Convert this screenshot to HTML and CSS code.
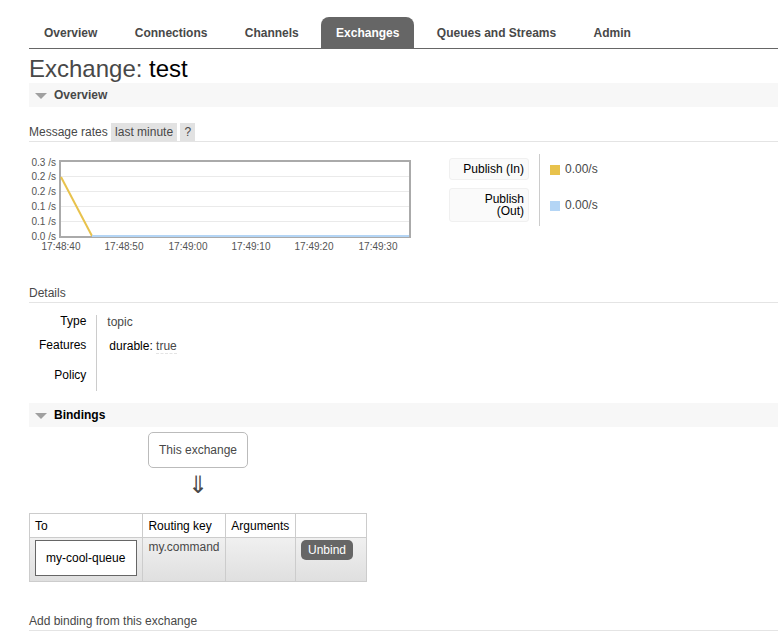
FILE: index.html
```html
<!DOCTYPE html>
<html lang="en">
<head>
<meta charset="utf-8">
<title>Exchange: test</title>
<link rel="stylesheet" href="styles.css">
</head>
<body>
<nav class="tabs">
  <a href="#overview">Overview</a>
  <a href="#connections">Connections</a>
  <a href="#channels">Channels</a>
  <a href="#exchanges" class="selected" aria-current="page">Exchanges</a>
  <a href="#queues">Queues and Streams</a>
  <a href="#admin">Admin</a>
</nav>
<main>
  <h1>Exchange: <b>test</b></h1>
  <section>
    <h2 class="section-title">Overview</h2>
    <h3 class="subtitle rates-title">Message rates <a href="#range" class="tag">last minute</a> <a href="#help" class="tag">?</a></h3>
    <div class="rates">
      <svg class="chart" width="390" height="101" viewBox="0 -1 390 101" role="img" aria-label="Message rates">
        <g class="y-labels">
          <text x="27" y="11">0.3 /s</text>
          <text x="27" y="25">0.2 /s</text>
          <text x="27" y="40">0.2 /s</text>
          <text x="27" y="55">0.1 /s</text>
          <text x="27" y="70">0.1 /s</text>
          <text x="27" y="85">0.0 /s</text>
        </g>
        <path class="grid" d="M32 21.500H380M32 36.500H380M32 51.500H380M32 66.500H380"/>
        <rect class="frame" x="31" y="6" width="350" height="76"/>
        <path class="line-in" d="M32 22L63 81"/>
        <path class="line-out" d="M63 81H380"/>
        <g class="x-labels">
          <text x="32" y="95">17:48:40</text>
          <text x="95" y="95">17:48:50</text>
          <text x="159" y="95">17:49:00</text>
          <text x="222" y="95">17:49:10</text>
          <text x="285" y="95">17:49:20</text>
          <text x="349" y="95">17:49:30</text>
        </g>
      </svg>
      <table class="legend">
        <tr><th scope="row"><span class="key">Publish (In)</span></th><td><i class="swatch in"></i>0.00/s</td></tr>
        <tr><th scope="row"><span class="key">Publish (Out)</span></th><td><i class="swatch out"></i>0.00/s</td></tr>
      </table>
    </div>
    <h3 class="subtitle">Details</h3>
    <table class="facts">
      <tr><th scope="row">Type</th><td>topic</td></tr>
      <tr><th scope="row">Features</th><td><span class="param">durable:</span> <abbr>true</abbr></td></tr>
      <tr><th scope="row">Policy</th><td></td></tr>
    </table>
  </section>
  <section>
    <h2 class="section-title dark">Bindings</h2>
    <div class="flow">
      <span class="exchange">This exchange</span>
      <span class="arrow">⇓</span>
    </div>
    <table class="bindings">
      <thead><tr><th>To</th><th>Routing key</th><th>Arguments</th><th></th></tr></thead>
      <tbody><tr>
        <td><a href="#my-cool-queue" class="queue">my-cool-queue</a></td>
        <td>my.command</td>
        <td></td>
        <td><button type="button">Unbind</button></td>
      </tr></tbody>
    </table>
    <h3 class="subtitle">Add binding from this exchange</h3>
  </section>
</main>
</body>
</html>
```
FILE: styles.css
```css
* { box-sizing: border-box; }
body {
  margin: 0;
  padding: 17px 0 0 29px;
  background: #fff;
  color: #484848;
  font: 12px/14px "Liberation Sans", Arial, sans-serif;
}
a { color: inherit; text-decoration: none; }

.tabs { border-bottom: 1px solid #666; }
.tabs a {
  display: inline-block;
  margin-right: 4px;
  padding: 9px 15px 8px;
  border-radius: 8px 8px 0 0;
  font-weight: bold;
  white-space: nowrap;
}
.tabs .selected { background: #666; color: #fff; }

h1 {
  margin: 0;
  padding: 6px 0 0;
  font-size: 24px;
  line-height: 28px;
  font-weight: normal;
}
h1 b { font-weight: normal; color: #000; }

.section-title {
  display: flex;
  align-items: center;
  gap: 7px;
  margin: 0;
  padding: 5px;
  background: #f7f7f7;
  font-size: 12px;
  line-height: 14px;
}
.section-title::before {
  content: "";
  margin: 2px 0 0 1px;
  border: solid transparent;
  border-width: 6px 6px 0;
  border-top-color: #a0a0a0;
}
.dark { color: #000; }

.subtitle {
  margin: 0;
  padding-bottom: 2px;
  border-bottom: 1px solid #e4e4e4;
  font-size: 12px;
  line-height: 14px;
  font-weight: normal;
}
.rates-title {
  margin-top: 16px;
  padding-bottom: 0;
  line-height: 18px;
}
.tag {
  display: inline-block;
  padding: 0 4px;
  background: #e2e2e2;
}

.rates {
  display: flex;
  align-items: flex-start;
  gap: 30px;
  padding: 12px 0 31px;
}
.chart {
  display: block;
  flex: none;
  font-size: 10px;
  fill: #545454;
}
.y-labels { text-anchor: end; }
.x-labels { text-anchor: middle; }
.grid { fill: none; stroke: #eaeaea; }
.frame { fill: none; stroke: #aaa; stroke-width: 2; }
.line-in { fill: none; stroke: #e8c24c; stroke-width: 2; }
.line-out { fill: none; stroke: #b4d5f5; stroke-width: 2; }

table { border-collapse: collapse; }
th { font-weight: normal; color: #000; }
.legend { line-height: 12px; }
.legend th {
  padding: 4px 10px 4px 0;
  border-right: 1px solid #ccc;
  text-align: right;
}
.legend td { padding: 0 10px; }
.key {
  display: block;
  width: 80px;
  padding: 4px;
  border: 1px solid #f0f0f0;
  border-radius: 3px;
  background: #fafafa;
}
.swatch {
  display: inline-block;
  width: 10px;
  height: 10px;
  margin-right: 5px;
  vertical-align: -2px;
}
.in { background: #e8c24c; }
.out { background: #b4d5f5; }

.facts {
  margin: 12px 0;
  border-collapse: separate;
  border-spacing: 0;
}
.facts th {
  padding: 0 10px;
  border-right: 1px solid #ccc;
  line-height: 12px;
  text-align: right;
  vertical-align: top;
}
.facts tr { height: 24px; }
.facts tr:nth-child(2) { height: 30px; }
.facts tr:last-child { height: 22px; }
.facts td { padding: 0 10px; vertical-align: top; }
.param { padding-left: 2px; color: #000; }
.facts abbr { border-bottom: 1px dashed #e4e4e4; }

.flow {
  display: flex;
  flex-direction: column;
  align-items: center;
  width: 338px;
  padding: 5px 0 16px;
}
.exchange {
  padding: 10px;
  border: 1px solid #bbb;
  border-radius: 5px;
  line-height: 14px;
}
.arrow { margin-top: 5px; font-size: 24px; line-height: 24px; }

.bindings { width: 338px; margin-bottom: 32px; }
.bindings th, .bindings td {
  border: 1px solid #ccc;
  padding: 5px 5px 4px;
  text-align: left;
  vertical-align: top;
}
.bindings td { padding: 2px 5px 5px; }
.bindings tbody tr { background: linear-gradient(#f0f0f0, #dfdfdf); }
.bindings th:last-child { width: 71px; }
.queue {
  display: block;
  padding: 10px;
  border: 1px solid #666;
  background: #fff;
  color: #000;
}
.bindings button {
  display: block;
  padding: 3px 7px;
  border: 0;
  border-radius: 5px;
  background: #666;
  color: #fff;
  font: inherit;
}
```
